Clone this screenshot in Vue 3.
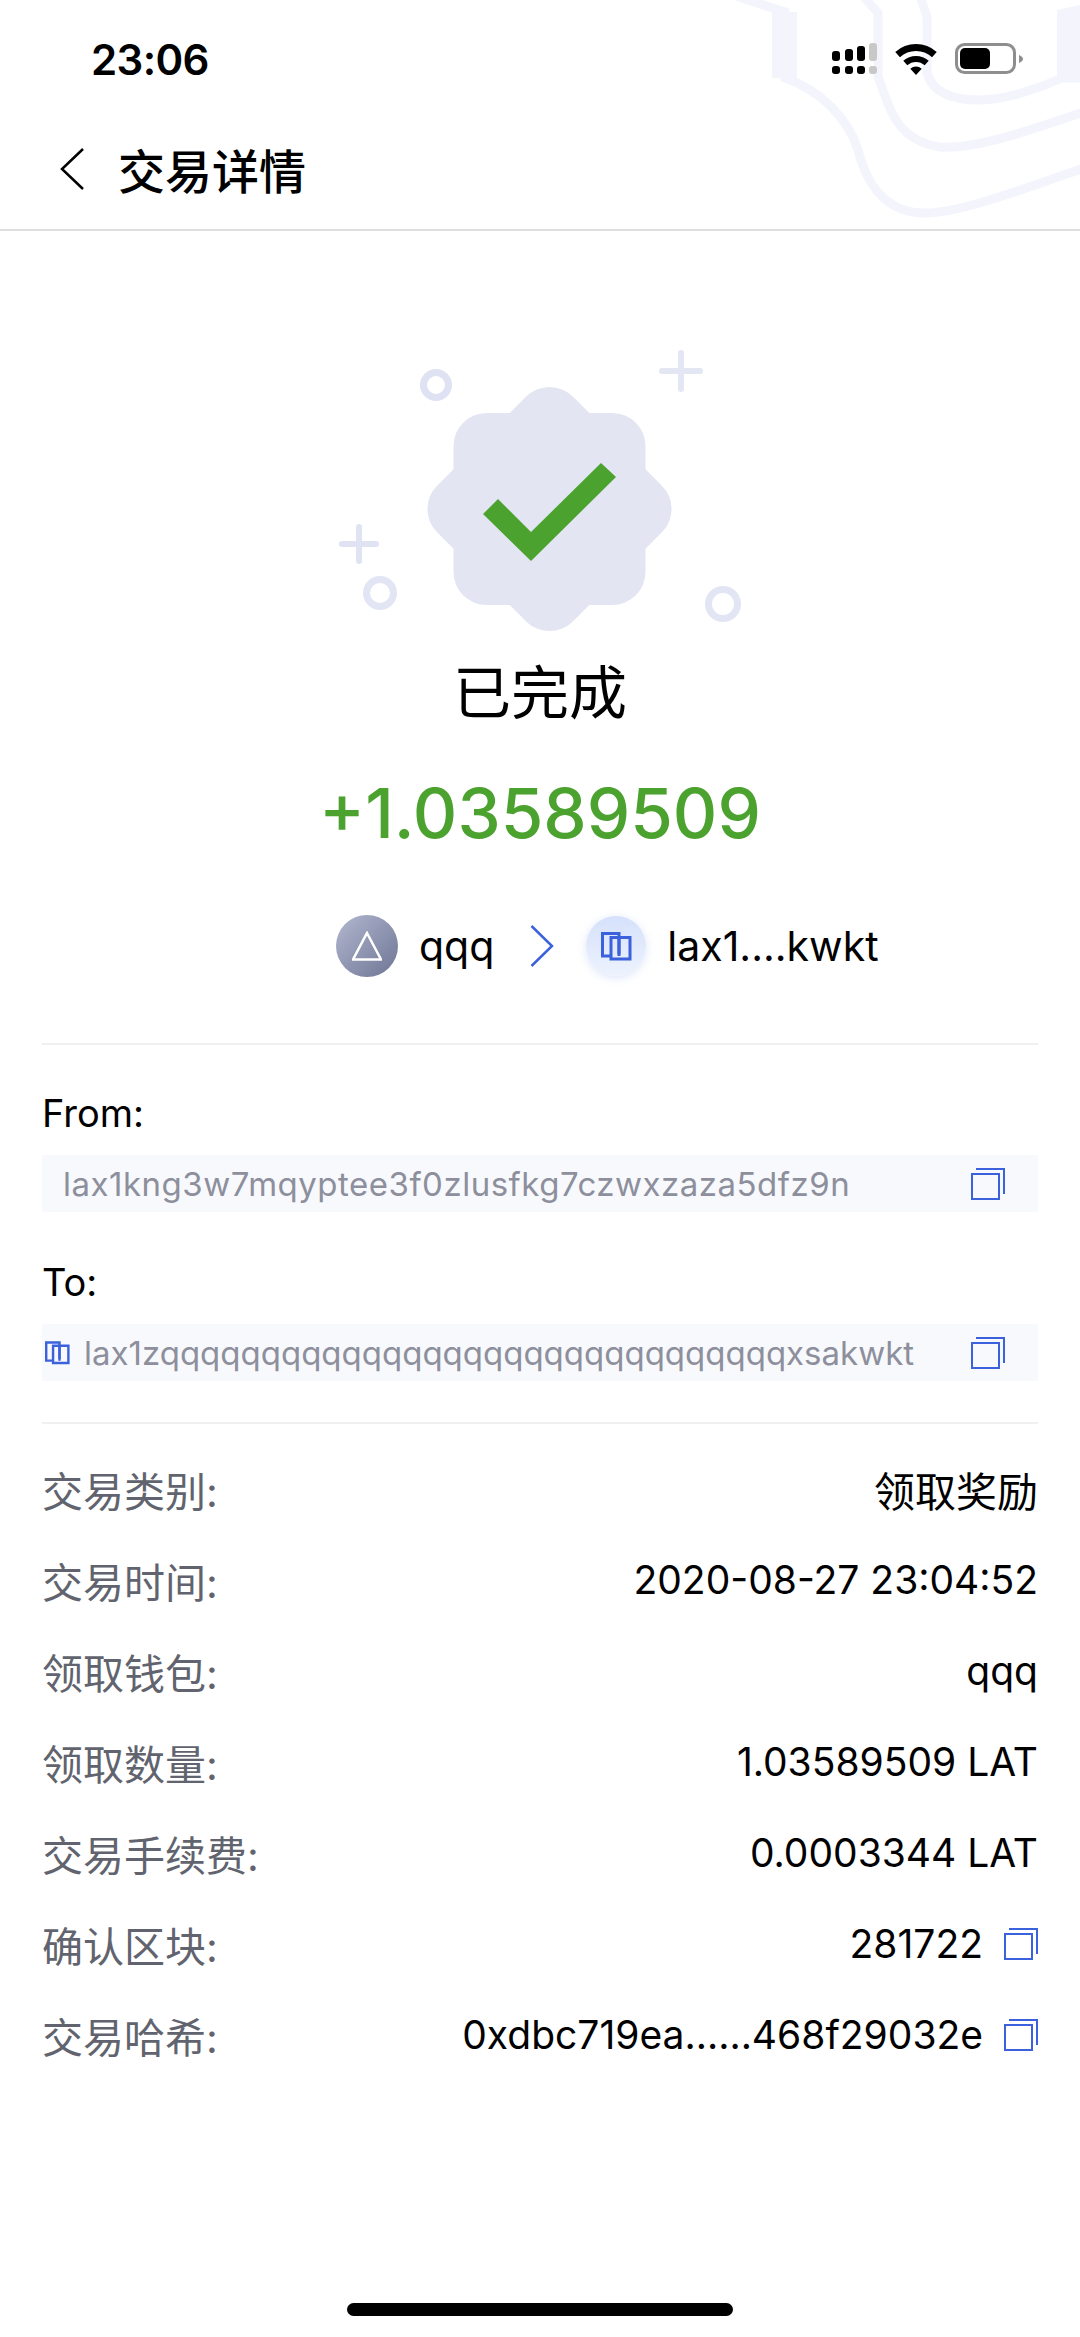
<script setup>
const rows = [
  { label: '交易类别:', value: '领取奖励', cjk: true },
  { label: '交易时间:', value: '2020-08-27 23:04:52' },
  { label: '领取钱包:', value: 'qqq' },
  { label: '领取数量:', value: '1.03589509 LAT' },
  { label: '交易手续费:', value: '0.0003344 LAT' },
  { label: '确认区块:', value: '281722', copy: true },
  { label: '交易哈希:', value: '0xdbc719ea......468f29032e', copy: true }
]
</script>

<template>
  <main class="page">
    <svg class="pattern" width="350" height="225" viewBox="730 0 350 225" fill="none">
      <path d="M736 -4 L785 12 V78 C820 90 848 118 858 150 C868 190 890 213 925 213 C960 213 1020 190 1084 168" stroke="#f4f5fc" stroke-width="9" />
      <path d="M772 12 H797 V78 H772 Z" fill="#f4f5fc" />
      <path d="M863 -4 L878 13 V77 C888 100 892 140 940 147 C975 150 1030 130 1084 112" stroke="#f4f5fc" stroke-width="9" />
      <path d="M920 -4 L927 17 V73 C932 92 950 100 980 100 C1005 100 1040 88 1062 78 H1084" stroke="#f4f5fc" stroke-width="9" />
      <path d="M1057 10 L1084 4 V78 H1057 Z" fill="#f4f5fc" />
    </svg>

    <div class="status">
      <span class="time">23:06</span>
      <div class="status__icons">
        <svg width="46" height="32" viewBox="0 0 46 32">
          <rect x="0" y="8" width="8" height="10" rx="3" fill="#000" />
          <rect x="13" y="6" width="8" height="12" rx="3" fill="#000" />
          <rect x="25" y="3" width="8" height="15" rx="3" fill="#000" />
          <rect x="37" y="0" width="8" height="18" rx="3" fill="#c8c8c8" />
          <rect x="0" y="23" width="8" height="8" rx="3" fill="#000" />
          <rect x="13" y="23" width="8" height="8" rx="3" fill="#000" />
          <rect x="25" y="23" width="8" height="8" rx="3" fill="#000" />
          <rect x="37" y="23" width="8" height="8" rx="3" fill="#c8c8c8" />
        </svg>
        <svg class="wifi" width="42" height="31" viewBox="0 0 42 31" fill="none">
          <path d="M2.6 10.6 A27.5 27.5 0 0 1 39.4 10.6" stroke="#000" stroke-width="7" />
          <path d="M10.3 19.1 A16 16 0 0 1 31.7 19.1" stroke="#000" stroke-width="6" />
          <path d="M21 31 L15.3 24.7 A8.5 8.5 0 0 1 26.7 24.7 Z" fill="#000" />
        </svg>
        <svg class="battery" width="68" height="32" viewBox="0 0 68 32" fill="none">
          <rect x="1.5" y="1.5" width="58" height="28" rx="8" stroke="#8e8e8e" stroke-width="3" />
          <rect x="5" y="5" width="30" height="21" rx="5" fill="#000" />
          <path d="M64 12 C67 13 68 15 68 16 C68 17 67 19 64 20 Z" fill="#8e8e8e" />
        </svg>
      </div>
    </div>

    <header class="nav">
      <svg class="nav__back" width="26" height="42" viewBox="0 0 26 42" fill="none">
        <path d="M24 1 L3 21 L24 41" stroke="#000" stroke-width="2.5" />
      </svg>
      <h1>交易详情</h1>
    </header>

    <section class="hero">
      <svg class="hero__badge" width="420" height="290" viewBox="330 350 420 290" fill="none">
        <g fill="#e3e5f2">
          <rect x="453.5" y="413" width="192" height="192" rx="33" />
          <rect x="453.5" y="413" width="192" height="192" rx="33" transform="rotate(45 549.5 509)" />
        </g>
        <path d="M483 514 L498 499 L531 532 L601 463 L616 477 L531 561 Z" fill="#4ba22f" />
        <circle cx="436" cy="385" r="12.5" stroke="#dfe2f2" stroke-width="7" />
        <circle cx="380" cy="593" r="13.5" stroke="#e2e5f4" stroke-width="7" />
        <circle cx="723" cy="604" r="14.5" stroke="#e2e5f4" stroke-width="7" />
        <path d="M681 353 V389 M662 371 H700" stroke="#e3e6f3" stroke-width="6" stroke-linecap="round" />
        <path d="M359 527 V561 M342 544 H376" stroke="#e0e3f2" stroke-width="6" stroke-linecap="round" />
      </svg>
      <p class="hero__status">已完成</p>
      <p class="hero__amount">+1.03589509</p>
      <div class="hero__parties">
        <span class="avatar">
          <svg width="30" height="30" viewBox="0 0 30 30" fill="none">
            <path d="M15 2 L29 28.5 H1 Z" stroke="#fff" stroke-width="2.5" />
          </svg>
        </span>
        <span class="party-name">qqq</span>
        <svg class="arrow" width="24" height="42" viewBox="0 0 24 42" fill="none">
          <path d="M1.5 1 L22 21 L1.5 41" stroke="#3b62dc" stroke-width="2.5" />
        </svg>
        <span class="contract">
          <svg width="31" height="29" viewBox="0 0 31 29" fill="none">
            <path d="M9 24 H1.5 V1.5 H18 V24" stroke="#3b62dc" stroke-width="3" />
            <path d="M10 5.5 H29 V27 H10 Z M18 5.5 V22" stroke="#3b62dc" stroke-width="3" />
          </svg>
        </span>
        <span class="party-name">lax1....kwkt</span>
      </div>
    </section>

    <section class="addresses">
      <p class="addresses__label">From:</p>
      <div class="address">
        <span class="address__text address__text--pad">lax1kng3w7mqyptee3f0zlusfkg7czwxzaza5dfz9n</span>
        <svg class="copy" width="34" height="32" viewBox="0 0 34 32" fill="none">
          <path d="M5 1 H33 V26" stroke="#3b62dc" stroke-width="2" />
          <path d="M1 6 H28 V31 H1 Z" stroke="#3b62dc" stroke-width="2" />
        </svg>
      </div>
      <p class="addresses__label addresses__label--to">To:</p>
      <div class="address">
        <svg class="address__icon" width="25" height="24" viewBox="0 0 31 29" fill="none">
          <path d="M9 24 H1.5 V1.5 H18 V24" stroke="#3b62dc" stroke-width="3" />
          <path d="M10 5.5 H29 V27 H10 Z M18 5.5 V22" stroke="#3b62dc" stroke-width="3" />
        </svg>
        <span class="address__text">lax1zqqqqqqqqqqqqqqqqqqqqqqqqqqqqqqqxsakwkt</span>
        <svg class="copy" width="34" height="32" viewBox="0 0 34 32" fill="none">
          <path d="M5 1 H33 V26" stroke="#3b62dc" stroke-width="2" />
          <path d="M1 6 H28 V31 H1 Z" stroke="#3b62dc" stroke-width="2" />
        </svg>
      </div>
    </section>

    <section class="details">
      <div v-for="row in rows" :key="row.label" class="row">
        <span class="row__label">{{ row.label }}</span>
        <span class="row__value" :class="{ 'row__value--cjk': row.cjk }">{{ row.value }}</span>
        <svg v-if="row.copy" class="row__copy" width="34" height="32" viewBox="0 0 34 32" fill="none">
          <path d="M5 1 H33 V26" stroke="#3b62dc" stroke-width="2" />
          <path d="M1 6 H28 V31 H1 Z" stroke="#3b62dc" stroke-width="2" />
        </svg>
      </div>
    </section>

    <div class="home-bar"></div>
  </main>
</template>

<style scoped>
.page {
  position: relative;
  width: 1080px;
  height: 2337px;
  overflow: hidden;
  background: #fff;
  color: #000;
  font-family: "Inter", "Noto Sans CJK SC", sans-serif;
}

p, h1 {
  margin: 0;
}

.pattern {
  position: absolute;
  top: 0;
  right: 0;
}

.status {
  position: relative;
  display: flex;
  justify-content: space-between;
  align-items: center;
  height: 118px;
  padding: 0 57px 0 91px;
  box-sizing: border-box;
}

.time {
  font-size: 42px;
  font-weight: 600;
  letter-spacing: -0.6px;
}

.status__icons {
  display: flex;
  align-items: center;
}

.wifi {
  margin-left: 17px;
}

.battery {
  margin-left: 18px;
}

.nav {
  position: relative;
  display: flex;
  align-items: center;
  height: 113px;
  padding-left: 59px;
  padding-bottom: 10px;
  border-bottom: 2px solid #dedede;
  box-sizing: border-box;
}

.nav h1 {
  margin-left: 33px;
  font-size: 47px;
  font-weight: 500;
}

.hero {
  display: flex;
  flex-direction: column;
  align-items: center;
  padding-top: 119px;
}

.hero__badge {
  display: block;
}

.hero__status {
  font-size: 58px;
  line-height: 80px;
  margin-top: 13px;
}

.hero__amount {
  margin-top: 38px;
  font-size: 69px;
  font-weight: 500;
  line-height: 84px;
  color: #4ba22f;
}

.hero__parties {
  align-self: flex-start;
  display: flex;
  align-items: center;
  height: 62px;
  margin-top: 60px;
  padding-left: 336px;
}

.avatar {
  display: flex;
  align-items: center;
  justify-content: center;
  width: 62px;
  height: 62px;
  border-radius: 50%;
  background: linear-gradient(135deg, #b3b8d0, #6d7594);
}

.party-name {
  margin-left: 21px;
  font-size: 41px;
}

.arrow {
  margin-left: 36px;
}

.contract {
  display: flex;
  align-items: center;
  justify-content: center;
  width: 60px;
  height: 60px;
  margin-left: 32px;
  border-radius: 50%;
  background: linear-gradient(180deg, #d5e1fb, #edf2fd);
  box-shadow: 0 2px 8px rgba(120, 150, 230, 0.25);
}

.addresses {
  margin: 66px 42px 0;
  padding-top: 46px;
  padding-bottom: 41px;
  border-top: 2px solid #f0f0f0;
  border-bottom: 2px solid #f0f0f0;
}

.addresses__label {
  font-size: 38px;
  line-height: 44px;
}

.addresses__label--to {
  margin-top: 48px;
}

.address {
  display: flex;
  align-items: center;
  height: 57px;
  margin-top: 20px;
  padding-right: 33px;
  background: #f8f9fd;
}

.address__text {
  flex: 1;
  font-size: 33px;
  color: #8d8f9c;
}

.address__text--pad {
  padding-left: 21px;
  letter-spacing: 0.5px;
}

.address__icon {
  margin-left: 3px;
  margin-right: 14px;
}

.details {
  margin: 19px 42px 0;
}

.row {
  display: flex;
  align-items: center;
  height: 91px;
  font-size: 39px;
}

.row__label {
  font-size: 41px;
  color: #61646e;
  margin-right: auto;
}

.row__value--cjk {
  font-size: 41px;
}

.row__copy {
  margin-left: 21px;
}

.home-bar {
  position: absolute;
  left: 347px;
  top: 2303px;
  width: 386px;
  height: 13px;
  border-radius: 7px;
  background: #000;
}
</style>
